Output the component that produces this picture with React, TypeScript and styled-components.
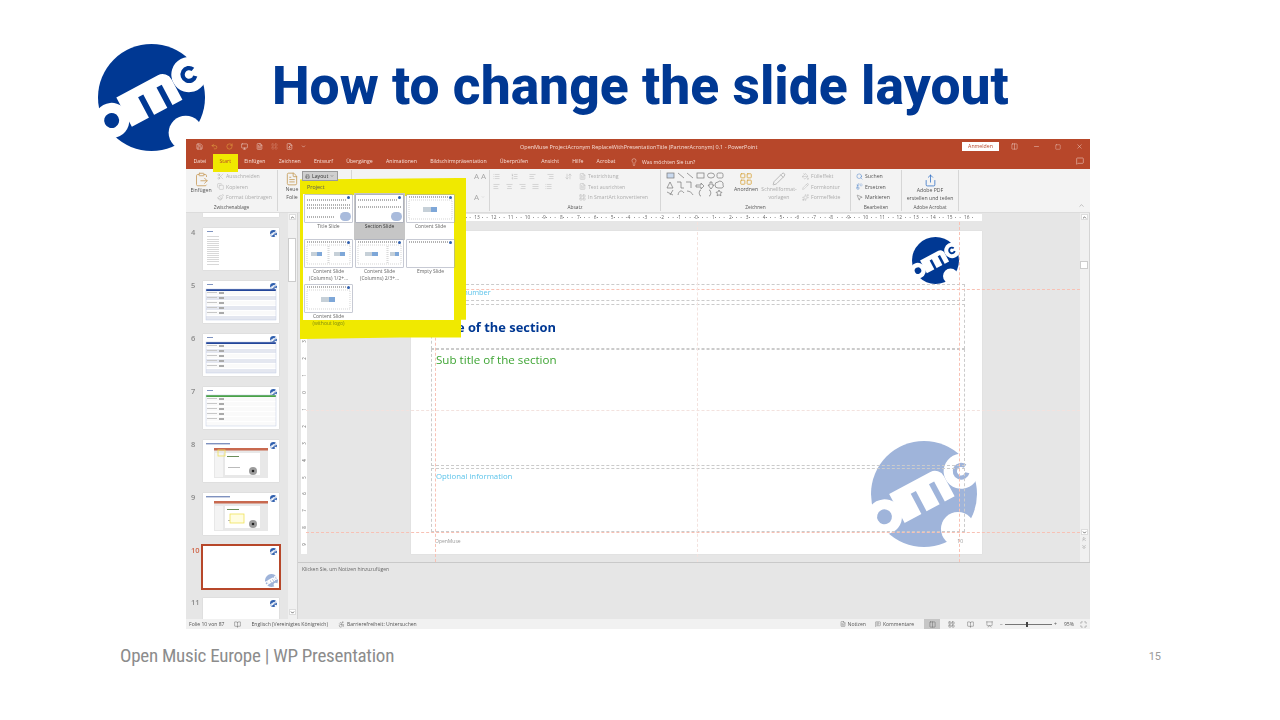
import React from 'react';
import styled, { createGlobalStyle } from 'styled-components';
import {
  Save, Undo2, RotateCw, Scissors, Copy, Paintbrush, Search, Replace, MousePointer2, Lightbulb,
  X, Minus, Square, MessageSquare, ClipboardPaste, ChevronUp, ChevronDown, FileText, Share,
  BookOpen, Accessibility, MessageSquareText, LayoutGrid, Columns2, Presentation, Maximize,
  List, ListOrdered, AlignLeft, AlignCenter, AlignRight, AlignJustify, PaintBucket, Pencil, Sparkles,
  ArrowDownUp, FileUp, Monitor, Printer, ChevronsUp, ChevronsDown,
} from 'lucide-react';

const NAVY = '#003893';
const RED = '#b7472a';
const YELLOW = '#f0e900';
const GUIDE = '#f8c1b4';

const GlobalStyle = createGlobalStyle`
  html, body {
    margin: 0;
    padding: 0;
    background: #fff;
  }
`;

const Page = styled.div`
  width: 1280px;
  height: 720px;
  overflow: hidden;
  display: flex;
  flex-direction: column;
  background: #fff;
  font-family: Roboto, "Liberation Sans", sans-serif;
`;

const Header = styled.header`
  height: 139px;
  flex: none;
  padding: 44px 0 0 98px;
  box-sizing: border-box;
  display: flex;
  align-items: flex-start;
`;

const Title = styled.h1`
  margin: 12px 0 0 67px;
  font-size: 53.4px;
  line-height: 60px;
  font-weight: 800;
  color: ${NAVY};
  white-space: nowrap;
`;

const LogoSvg = styled.svg<{ $size: number }>`
  flex: none;
  display: block;
  width: ${(p) => p.$size}px;
  height: ${(p) => p.$size}px;
`;

const FloatingLogo = styled(LogoSvg)<{ $left: number; $top: number }>`
  position: absolute;
  left: ${(p) => p.$left}px;
  top: ${(p) => p.$top}px;
`;

const LogoMark = ({ fill }: { fill: string }) => (
  <>
    <circle r="100" fill={fill} />
    <circle cx="64" cy="66" r="32" fill="#fff" />
    <g transform="rotate(-28)">
      <circle cx="-86" cy="3" r="33" fill="#fff" />
      <circle cx="-86" cy="3" r="14" fill={fill} />
      <path d="M-58 33V-31H30a19 19 0 0 1 19 19V31H-58Z" fill="#fff" />
      <rect x="-22" y="-12" width="11" height="46" fill={fill} />
      <rect x="17" y="-12" width="11" height="46" fill={fill} />
      <circle cx="82" cy="-5" r="33" fill="#fff" />
      <path d="M91 3A12 12 0 1 1 93 -10" fill="none" stroke={fill} strokeWidth="8" />
    </g>
  </>
);

const Logo = ({ size, fill = NAVY }: { size: number; fill?: string }) => (
  <LogoSvg $size={size} viewBox="-100 -100 200 200">
    <LogoMark fill={fill} />
  </LogoSvg>
);

// the screenshot of PowerPoint
const Shot = styled.div`
  position: relative;
  z-index: 1;
  flex: none;
  margin-left: 186px;
  width: 904px;
  height: 490px;
  overflow: hidden;
  display: flex;
  flex-direction: column;
  background: #e6e6e6;
  font-family: "Open Sans", "Liberation Sans", sans-serif;
  font-size: 5.2px;
  color: #555;
  filter: blur(0.45px);
  svg {
    flex: none;
  }
`;

const TitleBar = styled.div`
  height: 15px;
  flex: none;
  background: ${RED};
  color: #f6ddd5;
  display: flex;
  align-items: center;
  padding: 0 7px 0 10px;
  position: relative;
`;

const Quick = styled.div`
  display: flex;
  align-items: center;
  gap: 8px;
  color: #fff;
`;

const Caption = styled.span`
  position: absolute;
  left: 334px;
  top: 4px;
  font-size: 5.5px;
  white-space: nowrap;
`;

const TitleRight = styled.div`
  margin-left: auto;
  display: flex;
  align-items: center;
  gap: 15px;
  color: #fbe9e4;
`;

const SignIn = styled.span`
  background: #fff;
  color: ${RED};
  width: 37px;
  height: 9px;
  line-height: 9px;
  text-align: center;
  margin-right: -3px;
`;

const Tabs = styled.div`
  height: 15px;
  flex: none;
  background: ${RED};
  display: flex;
  align-items: center;
  padding-left: 1px;
  position: relative;
  color: #f7e0d9;
`;

const Tab = styled.span<{ $active?: boolean }>`
  padding: 0 6.6px;
  height: ${(p) => (p.$active ? 18 : 15)}px;
  margin-top: ${(p) => (p.$active ? 3 : 0)}px;
  line-height: 15px;
  white-space: nowrap;
  background: ${(p) => (p.$active ? YELLOW : 'transparent')};
  color: ${(p) => (p.$active ? RED : 'inherit')};
  z-index: 1;
`;

const TellMe = styled.span`
  display: flex;
  align-items: center;
  gap: 4px;
  margin-left: 8px;
`;

const CommentBtn = styled.span`
  position: absolute;
  right: 6px;
  top: 3px;
  color: #fbe9e4;
`;

const Ribbon = styled.div`
  height: 44px;
  flex: none;
  background: #f3f3f3;
  display: flex;
  position: relative;
  border-bottom: 1px solid #dcdcdc;
  box-sizing: border-box;
`;

const Group = styled.div<{ $width: number }>`
  width: ${(p) => p.$width}px;
  flex: none;
  box-sizing: border-box;
  border-right: 1px solid #d6d6d6;
  margin: 1px 0 1px;
  display: flex;
  flex-direction: column;
`;

const GroupBody = styled.div<{ $end?: boolean; $left?: number }>`
  flex: 1;
  display: flex;
  justify-content: ${(p) => (p.$end ? 'flex-end' : 'flex-start')};
  min-height: 0;
  padding: 2px 3px 0 ${(p) => p.$left ?? 3}px;
  gap: 4px;
`;

const GroupLabel = styled.div`
  height: 8px;
  line-height: 8px;
  text-align: center;
  font-size: 4.8px;
  color: #555;
`;

const BigBtn = styled.div<{ $muted?: boolean; $width?: number; $top?: number }>`
  width: ${(p) => p.$width ?? 24}px;
  flex: none;
  display: flex;
  flex-direction: column;
  align-items: center;
  text-align: center;
  line-height: 7.6px;
  padding-top: ${(p) => p.$top ?? 0}px;
  color: ${(p) => (p.$muted ? '#adadad' : '#555')};
`;

const Col = styled.div<{ $left?: number }>`
  display: flex;
  flex-direction: column;
  gap: 2.6px;
  margin-left: ${(p) => p.$left ?? 0}px;
`;

const Item = styled.div<{ $muted?: boolean }>`
  display: flex;
  align-items: center;
  gap: 2px;
  height: 8px;
  white-space: nowrap;
  color: ${(p) => (p.$muted ? '#adadad' : '#555')};
`;

const IconRow = styled.div<{ $gap?: number }>`
  display: flex;
  align-items: center;
  gap: ${(p) => p.$gap ?? 6}px;
  height: 8px;
  color: #a8a8a8;
`;

const BigLetter = styled.span`
  font-size: 8px;
  line-height: 8px;
`;

const Collapse = styled.span`
  position: absolute;
  right: 5px;
  bottom: 1px;
  color: #777;
`;

const ShapesSvg = styled.svg`
  margin: 0 4px 0 2px;
`;

const Body = styled.div`
  flex: 1;
  display: flex;
  min-height: 0;
`;

const ThumbPane = styled.div`
  width: 102px;
  flex: none;
  display: flex;
  flex-direction: column;
  gap: 10.6px;
  overflow: hidden;
`;

const ThumbRow = styled.div`
  display: flex;
  flex: none;
`;

const ThumbNo = styled.span<{ $active?: boolean }>`
  width: 17px;
  padding-left: 5px;
  box-sizing: border-box;
  font-size: 7.5px;
  line-height: 9px;
  font-weight: 600;
  color: ${(p) => (p.$active ? '#d0694d' : '#8a8a8a')};
`;

const ThumbBox = styled.div<{ $active?: boolean; $height?: number }>`
  width: 76px;
  height: ${(p) => p.$height ?? 42.4}px;
  overflow: hidden;
  background: #fff;
  box-shadow: ${(p) => (p.$active ? `0 0 0 2px ${RED}` : '0 0 1px #bbb')};
  svg {
    display: block;
  }
`;

const VScroll = styled.div`
  width: 10px;
  flex: none;
  background: #f0f0f0;
  display: flex;
  flex-direction: column;
  align-items: center;
  border-right: 1px solid #d4d4d4;
  box-sizing: border-box;
  padding-right: 1px;
`;

const ScrollBtn = styled.span`
  width: 7px;
  height: 6px;
  background: #fff;
  border: 1px solid #ddd;
  box-sizing: border-box;
  display: flex;
  align-items: center;
  justify-content: center;
  margin-top: 1px;
  color: #222;
  flex: none;
`;

const ScrollThumb = styled.span<{ $top: number; $height: number }>`
  width: 8px;
  height: ${(p) => p.$height}px;
  margin-top: ${(p) => p.$top}px;
  background: #fff;
  border: 1px solid #ccc;
  box-sizing: border-box;
  flex: none;
`;

const NavGlyph = styled.span`
  height: 8px;
  display: flex;
  align-items: center;
  color: #555;
  flex: none;
`;

const Spacer = styled.div<{ $size?: number }>`
  flex: ${(p) => (p.$size ? `0 0 ${p.$size}px` : '1')};
`;

const Work = styled.div`
  flex: 1;
  min-width: 0;
  display: flex;
  flex-direction: column;
`;

const EditorRow = styled.div`
  height: 349px;
  flex: none;
  display: flex;
  border-bottom: 1px solid #c9c9c9;
`;

const Editor = styled.div`
  flex: 1;
  position: relative;
  overflow: hidden;
  display: flex;
  flex-direction: column;
`;

const HRuler = styled.div`
  margin: 1px 0 0 113px;
  width: 571px;
  height: 7px;
  background: #fff;
  display: flex;
  justify-content: center;
  overflow: hidden;
  flex: none;
`;

const RulerCell = styled.span`
  width: 16.9px;
  flex: none;
  text-align: center;
  font-size: 4.8px;
  line-height: 7px;
  color: #666;
  background: radial-gradient(circle, #888 0.4px, transparent 0.6px) 0 0 / 4.2px 7px repeat-x;
  span {
    background: #fff;
    padding: 0 0.6px;
  }
`;

const Canvas = styled.div`
  flex: 1;
  display: flex;
  align-items: flex-start;
  padding: 10px 0 0 3px;
`;

const VRuler = styled.div`
  width: 6px;
  height: 323px;
  flex: none;
  background: #fff;
  display: flex;
  flex-direction: column;
  justify-content: center;
  align-items: center;
  overflow: hidden;
`;

const VRulerCell = styled.span`
  height: 16.9px;
  flex: none;
  line-height: 16.9px;
  font-size: 4.4px;
  color: #666;
  transform: rotate(-90deg);
`;

const SlideSheet = styled.div`
  position: relative;
  margin-left: 104px;
  width: 571px;
  height: 323px;
  flex: none;
  background: #fff;
  box-sizing: border-box;
  padding: 53px 0 0 20px;
  display: flex;
  flex-direction: column;
  box-shadow: 0 0 1px #ccc;
`;

const Placeholder = styled.div<{ $height: number; $color: string; $size: number; $bold?: boolean; $gap?: number; $center?: boolean }>`
  position: relative;
  width: 534px;
  height: ${(p) => p.$height}px;
  flex: none;
  box-sizing: border-box;
  border: 1px dashed #cbcbcb;
  margin-bottom: ${(p) => p.$gap ?? 0}px;
  padding: 2px 4px;
  display: flex;
  align-items: ${(p) => (p.$center ? 'center' : 'flex-start')};
  color: ${(p) => p.$color};
  font-size: ${(p) => p.$size}px;
  font-weight: ${(p) => (p.$bold ? 700 : 400)};
`;

const SlideFoot = styled.div`
  position: relative;
  width: 528px;
  margin-top: 6px;
  padding-left: 4px;
  display: flex;
  justify-content: space-between;
  font-size: 5px;
  color: #999;
`;

const GuideH = styled.div<{ $top: number; $pale?: boolean }>`
  position: absolute;
  left: 8px;
  right: 0;
  top: ${(p) => p.$top}px;
  border-top: 1px dashed ${(p) => (p.$pale ? '#f3e2de' : GUIDE)};
`;

const GuideV = styled.div<{ $left: number; $pale?: boolean }>`
  position: absolute;
  top: 9px;
  bottom: 0;
  left: ${(p) => p.$left}px;
  border-left: 1px dashed ${(p) => (p.$pale ? '#f3e2de' : GUIDE)};
`;

const Notes = styled.div`
  flex: 1;
  padding: 3px 4px;
  color: #666;
  font-size: 5px;
`;

const StatusBar = styled.div`
  height: 10px;
  flex: none;
  background: #f1f1f1;
  display: flex;
  align-items: center;
  padding: 0 3px;
  color: #555;
  font-size: 5.1px;
  white-space: nowrap;
`;

const StatusLeft = styled.div`
  display: flex;
  align-items: center;
  gap: 10px;
`;

const StatusRight = styled.div`
  margin-left: auto;
  display: flex;
  align-items: center;
`;

const StatusItem = styled.span`
  display: flex;
  align-items: center;
  gap: 2px;
`;

const ViewBtn = styled.span<{ $on?: boolean }>`
  width: 16px;
  height: 10px;
  margin-right: 3px;
  display: flex;
  align-items: center;
  justify-content: center;
  background: ${(p) => (p.$on ? '#c6c6c6' : 'transparent')};
`;

const ZoomTrack = styled.span`
  position: relative;
  width: 47px;
  height: 1px;
  margin: 0 2px;
  background: #777;
  &::after {
    content: '';
    position: absolute;
    left: 21px;
    top: -2px;
    width: 2px;
    height: 5px;
    background: #444;
  }
`;

// hand-drawn marker around the layout menu
const Marker = styled.div`
  position: absolute;
  left: 114px;
  top: 39px;
  width: 166px;
  height: 161px;
  background: ${YELLOW};
  clip-path: polygon(0 1%, 95% 0, 100% 0, 100% 88%, 97% 88%, 97% 99%, 60% 99%, 2% 100%, 0 100%);
`;

const LayoutBtn = styled.div`
  position: absolute;
  left: 116px;
  top: 32px;
  width: 36px;
  height: 10px;
  box-sizing: border-box;
  background: #cfcfcf;
  border: 1px solid #9a9a9a;
  display: flex;
  align-items: center;
  gap: 2px;
  padding-left: 2px;
  font-size: 5.2px;
  color: #333;
  svg {
    flex: none;
  }
`;

const LayoutMenu = styled.div`
  position: absolute;
  left: 117px;
  top: 44px;
  width: 151px;
  height: 140px;
  font-size: 5px;
  color: #555;
`;

const MenuHead = styled.div`
  height: 11px;
  line-height: 9px;
  padding-left: 4px;
  font-size: 5.4px;
  color: #555;
`;

const MenuPanel = styled.div`
  position: relative;
  height: 126px;
  box-sizing: border-box;
  padding: 1px 1px 0 2px;
  display: grid;
  grid-template-columns: repeat(3, 47px);
  grid-auto-rows: 45.2px;
  column-gap: 4px;
  &::before {
    content: '';
    position: absolute;
    inset: 0;
    background: #fff;
    clip-path: polygon(0 0, 100% 3px, 100% 100%, 0 100%);
  }
`;

const Tile = styled.div<{ $selected?: boolean }>`
  position: relative;
  display: flex;
  flex-direction: column;
  align-items: center;
  text-align: center;
  line-height: 7px;
  margin: -2px -2px 0;
  padding: 2px 2px 0;
  color: ${(p) => (p.$selected ? '#333' : '#666')};
  background: ${(p) => (p.$selected ? '#c6c6c6' : 'transparent')};
  svg {
    display: block;
    margin-bottom: 1px;
    background: #fff;
    box-shadow: 0 0 0 0.6px #a3a8b8;
  }
  em {
    font-style: normal;
    color: #7d8a10;
  }
`;

const Footer = styled.footer`
  display: flex;
  align-items: center;
  justify-content: space-between;
  margin-top: 16px;
  padding: 0 119px 0 120px;
  color: #8c8c8c;
`;

const FooterText = styled.span`
  font-size: 19px;
  line-height: 22px;
  letter-spacing: -0.25px;
  font-stretch: 75%;
  white-space: nowrap;
`;

const PageNo = styled.span`
  font-size: 11px;
  color: #9a9a9a;
`;

const i = { strokeWidth: 1.4 };

const Dashes = ({ x, y, w }: { x: number; y: number; w: number }) => (
  <line x1={x} y1={y} x2={x + w} y2={y} stroke="#999" strokeWidth="1.6" strokeDasharray="1 1" />
);

const MiniLogo = ({ x, y, s, fill = '#2f5fae' }: { x: number; y: number; s: number; fill?: string }) => (
  <svg x={x} y={y} width={s} height={s} viewBox="-100 -100 200 200">
    <LogoMark fill={fill} />
  </svg>
);

const TileArt = ({ kind }: { kind: string }) => (
  <svg width="47" height="27" viewBox="0 0 47 27">
    {kind !== 'title' && kind !== 'section' && <Dashes x={2} y={2} w={39} />}
    {kind === 'title' && (
      <>
        <Dashes x={2} y={5} w={39} /><Dashes x={2} y={10} w={43} /><Dashes x={2} y={13} w={43} />
        <Dashes x={2} y={22} w={28} />
        <rect x="35" y="17" width="11" height="9" rx="4.5" fill="#a9bbdc" />
      </>
    )}
    {kind === 'section' && (
      <>
        <Dashes x={2} y={5} w={39} /><Dashes x={2} y={12} w={43} />
        <rect x="35" y="17" width="11" height="9" rx="4.5" fill="#a9bbdc" />
      </>
    )}
    <rect x="42" y="1" width="3" height="3" rx="1.5" fill="#2f5fae" />
    {(kind === 'content' || kind === 'plain') && (
      <>
        <rect x="2" y="5" width="43" height="19" fill="none" stroke="#bbb" strokeWidth="0.6" strokeDasharray="1 1" />
        <rect x="16" y="12" width="8" height="5" fill="#c6d0d8" /><rect x="24" y="12" width="6" height="5" fill="#7ea7d8" />
      </>
    )}
    {kind === 'half' && (
      <>
        <rect x="2" y="5" width="21" height="19" fill="none" stroke="#bbb" strokeWidth="0.6" strokeDasharray="1 1" />
        <rect x="24" y="5" width="21" height="19" fill="none" stroke="#bbb" strokeWidth="0.6" strokeDasharray="1 1" />
        <rect x="6" y="12" width="6" height="4" fill="#c6d0d8" /><rect x="12" y="12" width="5" height="4" fill="#7ea7d8" />
        <rect x="29" y="12" width="6" height="4" fill="#c6d0d8" /><rect x="35" y="12" width="5" height="4" fill="#7ea7d8" />
      </>
    )}
    {kind === 'twothirds' && (
      <>
        <rect x="2" y="5" width="29" height="19" fill="none" stroke="#bbb" strokeWidth="0.6" strokeDasharray="1 1" />
        <rect x="32" y="5" width="13" height="19" fill="none" stroke="#bbb" strokeWidth="0.6" strokeDasharray="1 1" />
        <rect x="9" y="12" width="7" height="4" fill="#c6d0d8" /><rect x="16" y="12" width="6" height="4" fill="#7ea7d8" />
        <rect x="34" y="12" width="5" height="4" fill="#c6d0d8" /><rect x="39" y="12" width="4" height="4" fill="#7ea7d8" />
      </>
    )}
  </svg>
);

const ThumbArt = ({ kind }: { kind: string }) => (
  <svg width="76" height="42.4" viewBox="0 0 76 42.4">
    {kind !== 'stub' && <MiniLogo x={67} y={2} s={7} />}
    {(kind === 'list' || kind === 'blue' || kind === 'green') && (
      <rect x="4" y="3" width="6" height="1" fill="#8094c0" />
    )}
    {kind === 'list' &&
      [8, 11, 13, 15, 17, 19, 21, 23, 25, 27, 29, 31, 33, 36].map((y) => (
        <rect key={y} x="4" y={y} width="12" height="1" fill="#d8d8d8" />
      ))}
    {(kind === 'blue' || kind === 'green') && (
      <>
        <rect x="3" y="8" width="70" height="2.2" fill={kind === 'blue' ? '#23469a' : '#4aa347'} />
        {[10, 15, 20, 25, 30, 35].map((y, n) => (
          <rect key={y} x="3" y={y} width="70" height="4" fill={n % 2 === 1 && kind === 'blue' ? '#e4e7f0' : '#fafafa'} />
        ))}
        {[11, 16, 21, 26, 31].map((y) => (
          <g key={y}>
            <rect x="4" y={y} width="10" height="1" fill="#c8c8c8" />
            <rect x="16" y={y} width="5" height="2" fill="#aaa" />
          </g>
        ))}
        <rect x="3" y="8" width="70" height="31" fill="none" stroke="#c2cde4" strokeWidth="0.5" />
      </>
    )}
    {(kind === 'shot1' || kind === 'shot2') && (
      <>
        <rect x="3" y="3" width="24" height="1.4" fill="#7f92bf" />
        <rect x="11" y="8" width="54" height="30" fill="#e8e8e8" />
        <rect x="11" y="8" width="54" height="2.5" fill="#c8694f" />
        <rect x="22" y="13" width="35" height="22" fill="#fff" />
        <rect x="12" y="13" width="8" height="24" fill="#f4f4f4" />
        <rect x="24" y="16" width="12" height="1" fill="#6b8e5a" />
        <rect x="25" y="27" width="12" height="1" fill="#bbb" />
        <circle cx="50" cy="31" r="4" fill="#9c9c9c" />
        <circle cx="50" cy="31" r="1.3" fill="#222" />
        {kind === 'shot1' ? (
          <rect x="15" y="10" width="7" height="6" fill="none" stroke="#efe25a" strokeWidth="0.8" />
        ) : (
          <rect x="27" y="21" width="14" height="9" fill="#fffde0" stroke="#efe25a" strokeWidth="0.8" />
        )}
      </>
    )}
    {kind === 'section' && <MiniLogo x={62} y={28} s={13} fill="#9fb4da" />}
  </svg>
);

const Shapes = () => (
  <ShapesSvg width="58" height="25" viewBox="0 0 58 25" fill="none" stroke="#777" strokeWidth="0.7">
    <rect x="1" y="1" width="7" height="5" fill="#c9d9ee" />
    <path d="M12 1l6 5M21 1l6 5" />
    <rect x="31" y="1" width="7" height="5" /><ellipse cx="45" cy="3.5" rx="3.5" ry="2.5" /><rect x="51" y="1" width="6" height="5" rx="1.5" />
    <path d="M4 10l3 6H1zM11 10h4v6h3M20 10h5v6M30 13h5v-2l3 3-3 3v-2h-5zM44 10h2v3h2l-3 4-3-4h2zM52 16a3 3 0 0 1 0-6 3 3 0 0 1 5 3 2 2 0 0 1-1 3z" />
    <path d="M1 20l6 3M4 23l3-5M12 23c1-5 4-5 6-2M21 19c3 0 5 2 6 4M35 18c-2 0-1 2-2 3 1 1 0 3 2 3M43 18c2 0 1 2 2 3-1 1 0 3-2 3M53 18l1 2 2 .3-1.5 1.5.4 2-1.9-1-1.9 1 .4-2-1.5-1.5 2-.3z" />
  </ShapesSvg>
);

const tabs = ['Datei', 'Start', 'Einfügen', 'Zeichnen', 'Entwurf', 'Übergänge', 'Animationen', 'Bildschirmpräsentation', 'Überprüfen', 'Ansicht', 'Hilfe', 'Acrobat'];

const thumbs = [
  { no: '4', kind: 'list' },
  { no: '5', kind: 'blue' },
  { no: '6', kind: 'blue' },
  { no: '7', kind: 'green' },
  { no: '8', kind: 'shot1' },
  { no: '9', kind: 'shot2' },
  { no: '10', kind: 'section', active: true },
  { no: '11', kind: 'blank' },
];

const layouts = [
  { kind: 'title', label: 'Title Slide' },
  { kind: 'section', label: 'Section Slide', selected: true },
  { kind: 'content', label: 'Content Slide' },
  { kind: 'half', label: <>Content Slide<br />(Columns) 1/2+...</> },
  { kind: 'twothirds', label: <>Content Slide<br />(Columns) 2/3+...</> },
  { kind: 'empty', label: 'Empty Slide' },
  { kind: 'plain', label: <>Content Slide<br /><em>(without logo)</em></> },
];

const rulerNumbers = Array.from({ length: 33 }, (_, n) => Math.abs(n - 16));
const vRulerNumbers = Array.from({ length: 19 }, (_, n) => Math.abs(n - 9));

const App: React.FC = () => {
  return (
    <Page>
      <GlobalStyle />
      <Header>
        <Logo size={107} />
        <Title>How to change the slide layout</Title>
      </Header>

      <Shot>
        <TitleBar>
          <Quick>
            <Save size={7} {...i} />
            <Undo2 size={7} color="#f6c34a" {...i} />
            <RotateCw size={7} color="#f6c34a" {...i} />
            <Monitor size={7} {...i} />
            <FileText size={7} {...i} />
            <LayoutGrid size={7} color="#d98e78" {...i} />
            <FileUp size={7} {...i} />
            <ChevronDown size={5} />
          </Quick>
          <Caption>OpenMuse ProjectAcronym ReplaceWithPresentationTitle (PartnerAcronym) 0.1 - PowerPoint</Caption>
          <TitleRight>
            <SignIn>Anmelden</SignIn>
            <Columns2 size={7} {...i} />
            <Minus size={7} {...i} />
            <Square size={6} {...i} />
            <X size={7} {...i} />
          </TitleRight>
        </TitleBar>

        <Tabs>
          {tabs.map((t) => (
            <Tab key={t} $active={t === 'Start'}>{t}</Tab>
          ))}
          <TellMe><Lightbulb size={8} {...i} />Was möchten Sie tun?</TellMe>
          <CommentBtn><MessageSquare size={8} {...i} /></CommentBtn>
        </Tabs>

        <Ribbon>
          <Group $width={92}>
            <GroupBody>
              <BigBtn $width={24}>
                <ClipboardPaste size={15} color="#c9a063" {...i} />
                Einfügen
              </BigBtn>
              <Col>
                <Item $muted><Scissors size={7} {...i} />Ausschneiden</Item>
                <Item $muted><Copy size={7} {...i} />Kopieren</Item>
                <Item $muted><Paintbrush size={7} {...i} />Format übertragen</Item>
              </Col>
            </GroupBody>
            <GroupLabel>Zwischenablage</GroupLabel>
          </Group>
          <Group $width={74}>
            <GroupBody>
              <BigBtn $width={22}>
                <FileText size={14} color="#c49a55" {...i} />
                Neue<br />Folie
              </BigBtn>
            </GroupBody>
            <GroupLabel />
          </Group>
          <Group $width={138}>
            <GroupBody $end>
              <Col>
                <IconRow $gap={2}><BigLetter>A</BigLetter><BigLetter>A</BigLetter></IconRow>
                <IconRow $gap={2} />
                <IconRow $gap={2}><BigLetter>A</BigLetter><ChevronDown size={4} {...i} /></IconRow>
              </Col>
            </GroupBody>
            <GroupLabel />
          </Group>
          <Group $width={171}>
            <GroupBody>
              <Col>
                <IconRow $gap={11}>
                  <List size={7} {...i} /><ListOrdered size={7} {...i} />
                  <AlignLeft size={7} {...i} /><AlignRight size={7} {...i} /><ArrowDownUp size={7} {...i} />
                </IconRow>
                <IconRow>
                  <AlignLeft size={7} {...i} /><AlignCenter size={7} {...i} />
                  <AlignRight size={7} {...i} /><AlignJustify size={7} {...i} /><List size={7} {...i} />
                </IconRow>
              </Col>
              <Col $left={3}>
                <Item $muted><FileText size={7} {...i} />Textrichtung</Item>
                <Item $muted><FileText size={7} {...i} />Text ausrichten</Item>
                <Item $muted><LayoutGrid size={7} {...i} />In SmartArt konvertieren</Item>
              </Col>
            </GroupBody>
            <GroupLabel>Absatz</GroupLabel>
          </Group>
          <Group $width={190}>
            <GroupBody>
              <Shapes />
              <BigBtn $width={28}>
                <LayoutGrid size={14} color="#d8a640" {...i} />
                Anordnen
              </BigBtn>
              <BigBtn $width={30} $muted>
                <Pencil size={14} {...i} />
                Schnellformat-<br />vorlagen
              </BigBtn>
              <Col $left={4}>
                <Item $muted><PaintBucket size={7} {...i} />Fülleffekt</Item>
                <Item $muted><Pencil size={7} {...i} />Formkontur</Item>
                <Item $muted><Sparkles size={7} {...i} />Formeffekte</Item>
              </Col>
            </GroupBody>
            <GroupLabel>Zeichnen</GroupLabel>
          </Group>
          <Group $width={51}>
            <GroupBody $left={5}>
              <Col>
                <Item><Search size={7} color="#2b6cc4" {...i} />Suchen</Item>
                <Item><Replace size={7} color="#2b6cc4" {...i} />Ersetzen</Item>
                <Item><MousePointer2 size={7} {...i} />Markieren</Item>
              </Col>
            </GroupBody>
            <GroupLabel>Bearbeiten</GroupLabel>
          </Group>
          <Group $width={57}>
            <GroupBody>
              <BigBtn $width={50} $top={2}>
                <Share size={13} color="#2b6cc4" {...i} />
                Adobe PDF<br />erstellen und teilen
              </BigBtn>
            </GroupBody>
            <GroupLabel>Adobe Acrobat</GroupLabel>
          </Group>
          <Collapse><ChevronUp size={7} {...i} /></Collapse>
        </Ribbon>

        <Body>
          <ThumbPane>
            <ThumbRow>
              <ThumbNo />
              <ThumbBox $height={4}><ThumbArt kind="stub" /></ThumbBox>
            </ThumbRow>
            {thumbs.map((t) => (
              <ThumbRow key={t.no}>
                <ThumbNo $active={t.active}>{t.no}</ThumbNo>
                <ThumbBox $active={t.active}><ThumbArt kind={t.kind} /></ThumbBox>
              </ThumbRow>
            ))}
          </ThumbPane>
          <VScroll>
            <ScrollBtn><ChevronUp size={5} strokeWidth={3} /></ScrollBtn>
            <ScrollThumb $top={18} $height={44} />
            <Spacer />
            <ScrollBtn><ChevronDown size={5} strokeWidth={3} /></ScrollBtn>
            <Spacer $size={4} />
          </VScroll>
          <Work>
            <EditorRow>
              <Editor>
                <HRuler>
                  {rulerNumbers.map((n, k) => (
                    <RulerCell key={k}><span>{n}</span></RulerCell>
                  ))}
                </HRuler>
                <Canvas>
                  <VRuler>
                    {vRulerNumbers.map((n, k) => (
                      <VRulerCell key={k}>{n}</VRulerCell>
                    ))}
                  </VRuler>
                  <SlideSheet>
                    <FloatingLogo $size={47} $left={501} $top={6} viewBox="-100 -100 200 200">
                      <LogoMark fill={NAVY} />
                    </FloatingLogo>
                    <FloatingLogo $size={106} $left={460} $top={210} viewBox="-100 -100 200 200">
                      <LogoMark fill="#9fb4da" />
                    </FloatingLogo>
                    <Placeholder $height={17} $color="#5bc3ea" $size={7.4} $gap={3}>Section number</Placeholder>
                    <Placeholder $height={45} $color={NAVY} $size={12.9} $bold $center>
                      Title of the section
                    </Placeholder>
                    <Placeholder $height={117} $color="#3fa535" $size={11.6} $gap={2}>Sub title of the section</Placeholder>
                    <Placeholder $height={64} $color="#5bc3ea" $size={7.8}>Optional information</Placeholder>
                    <SlideFoot><span>OpenMuse</span><span>10</span></SlideFoot>
                  </SlideSheet>
                </Canvas>
                <GuideH $top={76} />
                <GuideH $top={197} $pale />
                <GuideH $top={319} />
                <GuideV $left={137} />
                <GuideV $left={399} $pale />
                <GuideV $left={661} />
              </Editor>
              <VScroll>
                <ScrollBtn><ChevronUp size={5} strokeWidth={3} /></ScrollBtn>
                <ScrollThumb $top={41} $height={8} />
                <Spacer />
                <ScrollBtn><ChevronDown size={5} strokeWidth={3} /></ScrollBtn>
                <NavGlyph><ChevronsUp size={6} {...i} /></NavGlyph>
                <NavGlyph><ChevronsDown size={6} {...i} /></NavGlyph>
                <Spacer $size={11} />
              </VScroll>
            </EditorRow>
            <Notes>Klicken Sie, um Notizen hinzuzufügen</Notes>
          </Work>
        </Body>

        <StatusBar>
          <StatusLeft>
            <span>Folie 10 von 87</span>
            <BookOpen size={7} {...i} />
            <span>Englisch (Vereinigtes Königreich)</span>
            <StatusItem><Accessibility size={7} {...i} />Barrierefreiheit: Untersuchen</StatusItem>
          </StatusLeft>
          <StatusRight>
            <StatusItem><FileText size={6} {...i} />Notizen</StatusItem>
            <Spacer $size={9} />
            <StatusItem><MessageSquareText size={6} {...i} />Kommentare</StatusItem>
            <Spacer $size={10} />
            <ViewBtn $on><Columns2 size={7} {...i} /></ViewBtn>
            <ViewBtn><LayoutGrid size={7} {...i} /></ViewBtn>
            <ViewBtn><BookOpen size={7} {...i} /></ViewBtn>
            <ViewBtn><Presentation size={7} {...i} /></ViewBtn>
            <span>−</span>
            <ZoomTrack />
            <span>+</span>
            <Spacer $size={7} />
            <span>95%</span>
            <Spacer $size={6} />
            <Maximize size={7} {...i} />
          </StatusRight>
        </StatusBar>

        <Marker />
        <LayoutBtn><Printer size={5} {...i} />Layout<ChevronDown size={4} /></LayoutBtn>
        <LayoutMenu>
          <MenuHead>Project</MenuHead>
          <MenuPanel>
            {layouts.map((l) => (
              <Tile key={l.kind} $selected={l.selected}>
                <TileArt kind={l.kind} />
                <span>{l.label}</span>
              </Tile>
            ))}
          </MenuPanel>
        </LayoutMenu>
      </Shot>

      <Footer>
        <FooterText>Open Music Europe | WP Presentation</FooterText>
        <PageNo>15</PageNo>
      </Footer>
    </Page>
  );
};

export default App;
